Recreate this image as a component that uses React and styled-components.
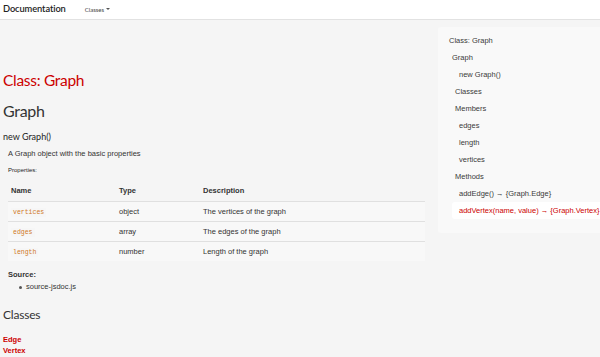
import React from "react";
import styled, { createGlobalStyle } from "styled-components";

const Global = createGlobalStyle`
  html, body { margin: 0; padding: 0; background: #f5f5f5; }
  body { font-family: "Liberation Sans", Arial, sans-serif; color: #333; overflow: hidden; }
  * { box-sizing: border-box; }
`;

const Page = styled.div`
  width: 600px;
  height: 357px;
  overflow: hidden;
  display: flex;
  flex-direction: column;
`;

const NavBar = styled.div`
  height: 20px;
  background: #fff;
  border-bottom: 1px solid #e2e2e2;
  display: flex;
  align-items: center;
  padding-left: 3px;
  flex-shrink: 0;
`;

const Brand = styled.div`
  font-family: "Lato", sans-serif;
  font-size: 9.3px;
  font-weight: 600;
  color: #222;
  letter-spacing: -0.1px;
  margin-top: -2px;
`;

const NavItem = styled.div`
  font-family: "Lato", sans-serif;
  font-size: 6px;
  color: #444;
  margin-left: 19px;
  display: flex;
  align-items: center;
  gap: 2px;
  margin-top: -1px;
`;

const Caret = styled.span`
  width: 0;
  height: 0;
  border-left: 2px solid transparent;
  border-right: 2px solid transparent;
  border-top: 2px solid #555;
`;

const Body = styled.div`
  display: flex;
  flex: 1;
  min-height: 0;
`;

const Main = styled.div`
  width: 438px;
  flex-shrink: 0;
  padding-top: 49px;
`;

const Title = styled.h1`
  font-family: "Lato", sans-serif;
  font-weight: 400;
  font-size: 15.5px;
  letter-spacing: -0.3px;
  color: #c00;
  margin: 0 0 0 3px;
  line-height: 22px;
`;

const SubTitle = styled.h2`
  font-family: "Lato", sans-serif;
  font-weight: 400;
  font-size: 16px;
  letter-spacing: -0.3px;
  color: #333;
  margin: 9px 0 0 3px;
  line-height: 22px;
`;

const Ctor = styled.h4`
  font-family: "Lato", sans-serif;
  font-weight: 400;
  font-size: 9px;
  color: #222;
  margin: 9px 0 0 3px;
  line-height: 12px;
`;

const Desc = styled.p`
  font-size: 7.5px;
  margin: 6px 0 0 8px;
  line-height: 10px;
  color: #333;
`;

const Label = styled.h5`
  font-size: 6px;
  font-weight: 400;
  margin: 7px 0 0 8px;
  line-height: 8px;
  color: #222;
`;

const Table = styled.table`
  margin: 7px 0 0 8px;
  width: 417px;
  border-collapse: collapse;
  font-size: 7.5px;
`;

const Th = styled.th`
  text-align: left;
  font-weight: 700;
  color: #333;
  height: 20px;
  padding: 0 0 0 ${(p) => p.$pl || 3}px;
  width: ${(p) => p.$w || "auto"};
`;

const Tr = styled.tr`
  border-top: 1px solid #e0e0e0;
  background: #f8f8f8;
`;

const Td = styled.td`
  height: 20px;
  padding: 0 0 0 ${(p) => p.$pl || 3}px;
  color: #333;
`;

const Code = styled.code`
  font-family: "Liberation Mono", monospace;
  font-size: 6.5px;
  color: #d0781e;
  background: #f6f6f6;
  padding: 1px 2px;
`;

const SourceLabel = styled.div`
  font-size: 7.5px;
  font-weight: 700;
  margin: 9px 0 0 8px;
  line-height: 10px;
  color: #333;
`;

const List = styled.ul`
  margin: 2px 0 0 0;
  padding-left: 26px;
  font-size: 7.5px;
  line-height: 10px;
  list-style: none;
`;

const Li = styled.li`
  position: relative;
  &::before {
    content: "";
    position: absolute;
    left: -7px;
    top: 4px;
    width: 3px;
    height: 3px;
    border-radius: 50%;
    background: #555;
  }
`;

const H3 = styled.h3`
  font-family: "Lato", sans-serif;
  font-weight: 400;
  font-size: 12px;
  letter-spacing: -0.2px;
  margin: 15px 0 0 3px;
  line-height: 16px;
  color: #333;
`;

const ClassLinks = styled.div`
  margin: 11px 0 0 3px;
  display: flex;
  flex-direction: column;
`;

const ClassLink = styled.a`
  font-size: 7.5px;
  font-weight: 700;
  color: #c00;
  line-height: 11px;
  text-decoration: none;
`;

const Side = styled.div`
  flex: 1;
  padding-top: 7px;
`;

const Panel = styled.div`
  background: #f9f9f9;
  border-radius: 3px 0 0 3px;
  height: 206px;
  padding: 5px 0 0 11px;
  display: flex;
  flex-direction: column;
`;

const NavLink = styled.div`
  font-size: 7.5px;
  line-height: 17px;
  height: 17px;
  color: ${(p) => (p.$active ? "#c00" : "#3a3a3a")};
  padding-left: ${(p) => p.$indent}px;
  white-space: nowrap;
  ${(p) =>
    p.$active
      ? `background:#fff; margin-left: 3px; padding-left: 7px; border-radius: 3px 0 0 3px;`
      : ""}
`;

const items = [
  ["Class: Graph", 0],
  ["Graph", 3],
  ["new Graph()", 10],
  ["Classes", 6],
  ["Members", 6],
  ["edges", 10],
  ["length", 10],
  ["vertices", 10],
  ["Methods", 6],
  ["addEdge() \u2192 {Graph.Edge}", 10],
];

const rows = [
  ["vertices", "object", "The vertices of the graph"],
  ["edges", "array", "The edges of the graph"],
  ["length", "number", "Length of the graph"],
];

export default function App() {
  return (
    <Page>
      <Global />
      <NavBar>
        <Brand>Documentation</Brand>
        <NavItem>
          Classes <Caret />
        </NavItem>
      </NavBar>
      <Body>
        <Main>
          <Title>Class: Graph</Title>
          <SubTitle>Graph</SubTitle>
          <Ctor>new Graph()</Ctor>
          <Desc>A Graph object with the basic properties</Desc>
          <Label>Properties:</Label>
          <Table>
            <thead>
              <tr>
                <Th $w="108px">Name</Th>
                <Th $w="84px">Type</Th>
                <Th>Description</Th>
              </tr>
            </thead>
            <tbody>
              {rows.map((r) => (
                <Tr key={r[0]}>
                  <Td>
                    <Code>{r[0]}</Code>
                  </Td>
                  <Td>{r[1]}</Td>
                  <Td>{r[2]}</Td>
                </Tr>
              ))}
            </tbody>
          </Table>
          <SourceLabel>Source:</SourceLabel>
          <List>
            <Li>source-jsdoc.js</Li>
          </List>
          <H3>Classes</H3>
          <ClassLinks>
            <ClassLink>Edge</ClassLink>
            <ClassLink>Vertex</ClassLink>
          </ClassLinks>
        </Main>
        <Side>
          <Panel>
            {items.map(([t, i]) => (
              <NavLink key={t} $indent={i}>
                {t}
              </NavLink>
            ))}
            <NavLink $active $indent={10}>
              addVertex(name, value) {"\u2192"} {"{Graph.Vertex}"}
            </NavLink>
          </Panel>
        </Side>
      </Body>
    </Page>
  );
}
